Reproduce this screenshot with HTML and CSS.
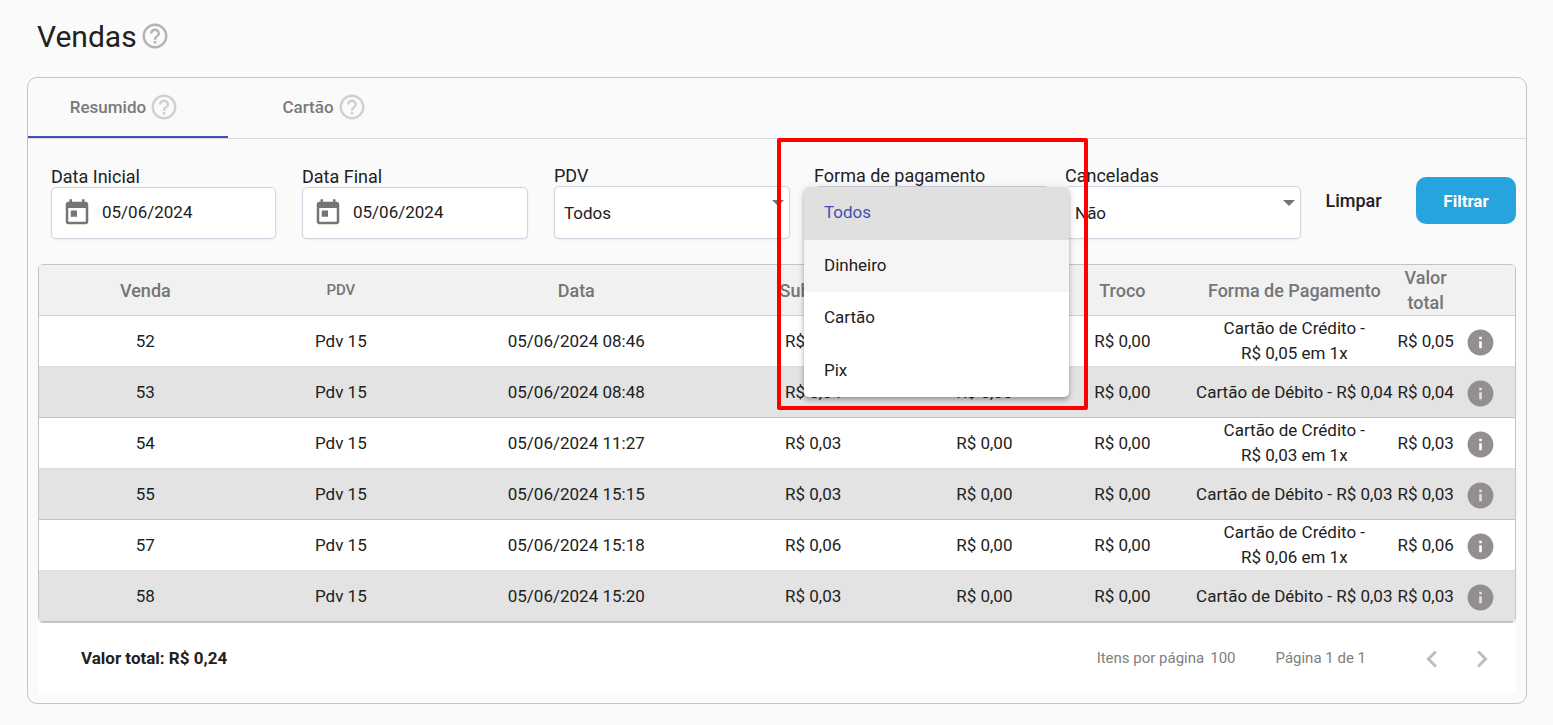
FILE: index.html
```html
<!DOCTYPE html>
<html lang="pt-BR">
<head>
<meta charset="utf-8">
<meta name="viewport" content="width=device-width, initial-scale=1">
<title>Vendas</title>
<link rel="stylesheet" href="styles.css">
</head>
<body>
<svg class="sprite" aria-hidden="true">
  <symbol id="help" viewBox="0 0 24 24"><path d="M11 18h2v-2h-2v2zm1-16C6.48 2 2 6.48 2 12s4.480 10 10 10 10-4.480 10-10S17.520 2 12 2zm0 18c-4.410 0-8-3.590-8-8s3.590-8 8-8 8 3.590 8 8-3.590 8-8 8zm0-14c-2.210 0-4 1.790-4 4h2c0-1.100.9-2 2-2s2 .9 2 2c0 2-3 1.750-3 5h2c0-2.250 3-2.500 3-5 0-2.210-1.790-4-4-4z"/></symbol>
  <symbol id="today" viewBox="0 0 24 24"><path d="M19 3h-1V1h-2v2H8V1H6v2H5c-1.110 0-1.990.9-1.990 2L3 19c0 1.100.89 2 2 2h14c1.100 0 2-.9 2-2V5c0-1.100-.9-2-2-2zm0 16H5V8h14v11zM7 10h5v5H7z"/></symbol>
  <symbol id="info" viewBox="0 0 24 24"><path d="M12 2C6.480 2 2 6.480 2 12s4.480 10 10 10 10-4.480 10-10S17.520 2 12 2zm1 14.500h-2v-5.500h2v5.500zm0-7h-2v-2h2v2z"/></symbol>
  <symbol id="prev" viewBox="0 0 24 24"><path d="M15.410 7.410L14 6l-6 6 6 6 1.410-1.410L10.830 12z"/></symbol>
  <symbol id="next" viewBox="0 0 24 24"><path d="M10 6L8.590 7.410 13.170 12l-4.580 4.590L10 18l6-6z"/></symbol>
</svg>
<main class="page">
  <header class="title">
    <h1>Vendas</h1>
    <svg class="help"><use href="#help"/></svg>
  </header>
  <section class="card">
    <div class="tabs" role="tablist">
      <button class="tab active" type="button" role="tab" aria-selected="true">Resumido <svg class="help"><use href="#help"/></svg></button>
      <button class="tab" type="button" role="tab" aria-selected="false">Cartão <svg class="help"><use href="#help"/></svg></button>
    </div>
    <div class="panel">
      <form class="filters">
        <div class="field">
          <label for="from">Data Inicial</label>
          <div class="box date">
            <button class="pick" type="button" aria-label="Abrir calendário"><svg><use href="#today"/></svg></button>
            <input id="from" type="text" value="05/06/2024">
          </div>
        </div>
        <div class="field">
          <label for="to">Data Final</label>
          <div class="box date">
            <button class="pick" type="button" aria-label="Abrir calendário"><svg><use href="#today"/></svg></button>
            <input id="to" type="text" value="05/06/2024">
          </div>
        </div>
        <div class="field pdv">
          <label for="pdv">PDV</label>
          <div class="box drop"><select id="pdv"><option>Todos</option></select></div>
        </div>
        <div class="field payment">
          <label for="payment">Forma de pagamento</label>
          <div class="box drop"><select id="payment"><option>Todos</option><option>Dinheiro</option><option>Cartão</option><option>Pix</option></select></div>
          <div class="menu" role="listbox" aria-label="Forma de pagamento">
            <button class="choice selected" type="button" role="option" aria-selected="true">Todos</button>
            <button class="choice hover" type="button" role="option">Dinheiro</button>
            <button class="choice" type="button" role="option">Cartão</button>
            <button class="choice" type="button" role="option">Pix</button>
          </div>
          <div class="highlight"></div>
        </div>
        <div class="field canceled">
          <label for="canceled">Canceladas</label>
          <div class="box drop"><select id="canceled"><option>Não</option></select></div>
        </div>
        <button class="clear" type="reset">Limpar</button>
        <button class="submit" type="button">Filtrar</button>
      </form>
      <div class="frame">
        <table class="sales">
          <colgroup><col class="c-sale"><col class="c-pdv"><col class="c-date"><col class="c-sub"><col class="c-disc"><col class="c-change"><col class="c-pay"><col class="c-total"><col class="c-info"></colgroup>
          <thead>
            <tr><th>Venda</th><th class="small">PDV</th><th>Data</th><th>Subtotal</th><th>Desconto</th><th>Troco</th><th>Forma de Pagamento</th><th>Valor total</th><th></th></tr>
          </thead>
          <tbody>
            <tr><td>52</td><td>Pdv 15</td><td>05/06/2024 08:46</td><td>R$ 0,05</td><td>R$ 0,00</td><td>R$ 0,00</td><td>Cartão de Crédito -<br>R$ 0,05 em 1x</td><td>R$ 0,05</td><td><button class="info" type="button" aria-label="Detalhes"><svg><use href="#info"/></svg></button></td></tr>
            <tr><td>53</td><td>Pdv 15</td><td>05/06/2024 08:48</td><td>R$ 0,04</td><td>R$ 0,00</td><td>R$ 0,00</td><td>Cartão de Débito - R$ 0,04</td><td>R$ 0,04</td><td><button class="info" type="button" aria-label="Detalhes"><svg><use href="#info"/></svg></button></td></tr>
            <tr><td>54</td><td>Pdv 15</td><td>05/06/2024 11:27</td><td>R$ 0,03</td><td>R$ 0,00</td><td>R$ 0,00</td><td>Cartão de Crédito -<br>R$ 0,03 em 1x</td><td>R$ 0,03</td><td><button class="info" type="button" aria-label="Detalhes"><svg><use href="#info"/></svg></button></td></tr>
            <tr><td>55</td><td>Pdv 15</td><td>05/06/2024 15:15</td><td>R$ 0,03</td><td>R$ 0,00</td><td>R$ 0,00</td><td>Cartão de Débito - R$ 0,03</td><td>R$ 0,03</td><td><button class="info" type="button" aria-label="Detalhes"><svg><use href="#info"/></svg></button></td></tr>
            <tr><td>57</td><td>Pdv 15</td><td>05/06/2024 15:18</td><td>R$ 0,06</td><td>R$ 0,00</td><td>R$ 0,00</td><td>Cartão de Crédito -<br>R$ 0,06 em 1x</td><td>R$ 0,06</td><td><button class="info" type="button" aria-label="Detalhes"><svg><use href="#info"/></svg></button></td></tr>
            <tr><td>58</td><td>Pdv 15</td><td>05/06/2024 15:20</td><td>R$ 0,03</td><td>R$ 0,00</td><td>R$ 0,00</td><td>Cartão de Débito - R$ 0,03</td><td>R$ 0,03</td><td><button class="info" type="button" aria-label="Detalhes"><svg><use href="#info"/></svg></button></td></tr>
          </tbody>
        </table>
      </div>
      <footer class="footer">
        <strong>Valor total: R$ 0,24</strong>
        <div class="pager">
          <span class="size"><span>Itens por página</span><span>100</span></span>
          <span>Página 1 de 1</span>
          <div class="arrows">
            <button type="button" aria-label="Página anterior"><svg><use href="#prev"/></svg></button>
            <button type="button" aria-label="Próxima página"><svg><use href="#next"/></svg></button>
          </div>
        </div>
      </footer>
    </div>
  </section>
</main>
</body>
</html>
```
FILE: styles.css
```css
* { box-sizing: border-box; }
body {
  margin: 0;
  background: #fafafa;
  color: #212121;
  font-family: Roboto, "Liberation Sans", sans-serif;
  font-size: 17px;
}
button, input, select { font: inherit; color: inherit; }
button { border: 0; padding: 0; background: none; cursor: pointer; }
svg { display: block; fill: currentColor; }
.sprite { width: 0; height: 0; position: absolute; }

.page { padding: 16px 26px 21px 27px; }
.title { display: flex; align-items: center; gap: 3px; height: 40px; padding-left: 10px; }
.title h1 { margin: 0; padding-top: 2px; font-size: 30px; font-weight: 400; line-height: 40px; }
.help { width: 30px; height: 30px; color: #b4b4b4; }

.card { margin-top: 21px; border: 1px solid #c4c4c4; border-radius: 10px; }
.tabs { display: flex; height: 61px; border-bottom: 1px solid #d9d9d9; }
.tab {
  display: flex;
  align-items: center;
  justify-content: center;
  gap: 3px;
  width: 200px;
  padding-right: 7px;
  border-bottom: 2px solid transparent;
  color: #7a7a7a;
  font-size: 17px;
  font-weight: 500;
}
.tab .help { color: #d0d0d0; }
.tab.active { border-bottom-color: #3f51b5; }

.panel { padding: 27px 10px 10px; }
.filters {
  display: grid;
  grid-template-columns: 251fr 252fr 260fr 251fr 236fr 115px 100px;
  align-items: end;
  padding-left: 13px;
}
.field { min-width: 0; padding-right: 26px; }
.field label { display: block; line-height: 20px; font-size: 18px; white-space: nowrap; }
.pdv { padding-right: 24px; }
.payment { position: relative; padding-right: 15px; }
.canceled { padding-right: 0; }
.box {
  height: 53px;
  border: 1px solid #d2d3e0;
  border-radius: 5px;
  background: #fff;
  box-shadow: 0 1px 2px rgba(60, 60, 120, 0.08);
}
.date { display: flex; align-items: center; gap: 10px; height: 52px; padding: 0 10px; }
.pick svg { width: 30px; height: 30px; color: #757575; }
.date input { flex: 1; min-width: 0; border: 0; padding: 0 0 2px; outline: 0; background: none; }
.drop { position: relative; }
.drop::after {
  content: "";
  position: absolute;
  top: 13px;
  right: 5px;
  border: 6px solid transparent;
  border-top-color: #757575;
  border-bottom: 0;
}
.drop select { appearance: none; width: 100%; height: 100%; border: 0; padding: 0 9px; background: none; outline: 0; font-size: 17px; }

.menu {
  position: absolute;
  z-index: 2;
  top: 21px;
  left: -10px;
  right: -4px;
  display: flex;
  flex-direction: column;
  height: 210px;
  overflow: hidden;
  border-radius: 5px;
  background: #fff;
  box-shadow: 0 2px 4px -1px rgba(0, 0, 0, 0.2), 0 4px 5px rgba(0, 0, 0, 0.14), 0 1px 10px rgba(0, 0, 0, 0.12);
}
.choice { flex: 1; padding: 0 20px 2px; text-align: left; font-size: 17px; }
.choice.hover { background: #f5f5f5; }
.choice.selected { background: #e0e0e0; color: #3f51b5; }
.highlight {
  position: absolute;
  z-index: 3;
  top: -28px;
  left: -37px;
  right: -23px;
  height: 272px;
  border: 4px solid #f00;
  border-radius: 2px;
  pointer-events: none;
}
.clear, .submit { height: 47px; margin-bottom: 15px; font-size: 18px; font-weight: 500; }
.clear { padding-right: 10px; }
.submit { border-radius: 10px; background: #27a3dd; color: #fff; font-size: 17px; font-weight: 700; }

.frame { margin-top: 25px; overflow: hidden; border: 1px solid #c4c4c4; border-radius: 5px; }
.sales { width: 100%; table-layout: fixed; border-collapse: separate; border-spacing: 0; background: #fff; }
.c-sale { width: 13.6%; }
.c-pdv { width: 13.7%; }
.c-date { width: 18.2%; }
.c-sub { width: 13.9%; }
.c-disc { width: 9.3%; }
.c-change { width: 9.4%; }
.c-pay { width: 13.9%; }
.c-total { width: 3.9%; }
.c-info { width: 4.1%; }
.sales th, .sales td { height: 51px; padding: 0; border-bottom: 1px solid #d0d0d0; line-height: 25px; text-align: center; }
.sales td { white-space: nowrap; }
.sales th { background: #f1f1f1; color: #757575; font-size: 18px; font-weight: 500; }
.sales th.small { font-size: 15px; }
.sales th:first-child, .sales td:first-child { padding-left: 12px; }
.sales td:last-child { padding-right: 8px; }
.sales tbody tr:nth-child(even) td { background: #e3e3e3; border-bottom-color: #c4c4c4; }
.sales tbody tr:nth-child(odd) td { border-bottom-color: #dcdcdc; }
.info { display: block; margin: 3px auto 0; color: #938f8f; }
.info svg { width: 31px; height: 31px; }

.footer { display: flex; align-items: center; justify-content: space-between; height: 70px; padding: 0 17px 0 43px; background: #fff; }
.footer strong { font-weight: 700; font-size: 17px; }
.pager { display: flex; align-items: center; gap: 40px; color: #808080; font-size: 15px; }
.size { display: flex; gap: 6px; }
.arrows { display: flex; gap: 16px; margin-left: 9px; padding-top: 2px; color: #bdbdbd; }
.arrows svg { width: 34px; height: 34px; }
```
